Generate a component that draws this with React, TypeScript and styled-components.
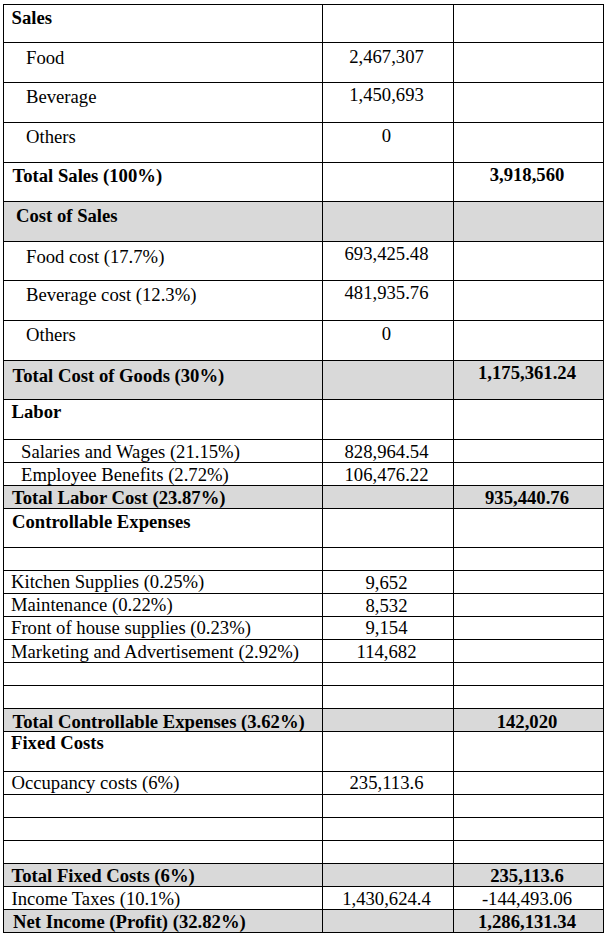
import React from "react";
import styled, { createGlobalStyle } from "styled-components";

const Global = createGlobalStyle`
  html, body { margin: 0; padding: 0; background: #ffffff; }
  body { font-family: "Liberation Serif", "Times New Roman", Times, serif; color: #000; }
`;

const Page = styled.div`
  padding: 4px 0 0 3px;
`;

const Sheet = styled.div`
  display: grid;
  grid-template-columns: 319px 131px 150px;
  width: 600px;
  border-top: 1px solid #000;
  border-left: 1px solid #000;
`;

const Cell = styled.div<{ $h: number; $gray?: boolean; $bold?: boolean; $pt: number; $indent?: number; $center?: boolean }>`
  box-sizing: border-box;
  height: ${(p) => p.$h}px;
  border-right: 1px solid #000;
  border-bottom: 1px solid #000;
  background: ${(p) => (p.$gray ? "#d9d9d9" : "#ffffff")};
  font-family: "Liberation Serif", "Times New Roman", Times, serif;
  font-size: 18.67px;
  line-height: 21px;
  font-weight: ${(p) => (p.$bold ? 700 : 400)};
  padding-top: ${(p) => Math.max(0, p.$pt)}px;
  padding-left: ${(p) => (p.$center ? 0 : p.$indent ?? 0)}px;
  padding-right: ${(p) => (p.$center ? 3 : 0)}px;
  text-align: ${(p) => (p.$center ? "center" : "left")};
  white-space: nowrap;
  overflow: visible;
`;

type Row = {
  label: string;
  bold?: boolean;
  gray?: boolean;
  indent: number;
  h: number;
  pt: number;
  npt?: number;
  c2?: string;
  c3?: string;
  c3bold?: boolean;
};

const lines = [4, 43, 83, 123, 163, 202, 242, 281, 321, 361, 400, 440, 463, 486, 509, 548, 571, 594, 617, 640, 663, 686, 709, 732, 772, 795, 818, 841, 864, 887, 910, 933];

const spec: Omit<Row, "h">[] = [
  { label: "Sales", bold: true, indent: 7.5, pt: 2.3 },
  { label: "Food", indent: 22, pt: 4, npt: 2.5, c2: "2,467,307" },
  { label: "Beverage", indent: 22, pt: 2.8, npt: 1, c2: "1,450,693" },
  { label: "Others", indent: 22, pt: 2.8, npt: 1.5, c2: "0" },
  { label: "Total Sales (100%)", bold: true, indent: 8.5, pt: 2, npt: 1, c3: "3,918,560", c3bold: true },
  { label: "Cost of Sales", bold: true, gray: true, indent: 12, pt: 3.2 },
  { label: "Food cost (17.7%)", indent: 22, pt: 3.5, npt: 1.3, c2: "693,425.48" },
  { label: "Beverage cost (12.3%)", indent: 22, pt: 3, npt: 1.3, c2: "481,935.76" },
  { label: "Others", indent: 22, pt: 3, npt: 2, c2: "0" },
  { label: "Total Cost of Goods (30%)", bold: true, gray: true, indent: 8.5, pt: 3.8, npt: 1.3, c3: "1,175,361.24", c3bold: true },
  { label: "Labor", bold: true, indent: 7.5, pt: 0.6 },
  { label: "Salaries and Wages (21.15%)", indent: 17, pt: 1.2, npt: 0.6, c2: "828,964.54" },
  { label: "Employee Benefits (2.72%)", indent: 17, pt: 1, npt: 1, c2: "106,476.22" },
  { label: "Total Labor Cost (23.87%)", bold: true, gray: true, indent: 8, pt: 1.2, npt: 0.6, c3: "935,440.76", c3bold: true },
  { label: "Controllable Expenses", bold: true, indent: 8, pt: 2.2 },
  { label: "", indent: 7, pt: 0 },
  { label: "Kitchen Supplies (0.25%)", indent: 7, pt: 0, npt: 0.6, c2: "9,652" },
  { label: "Maintenance (0.22%)", indent: 7, pt: 0, npt: 1, c2: "8,532" },
  { label: "Front of house supplies (0.23%)", indent: 7, pt: 0.3, npt: 0.3, c2: "9,154" },
  { label: "Marketing and Advertisement (2.92%)", indent: 7, pt: 0.6, npt: 0.6, c2: "114,682" },
  { label: "", indent: 7, pt: 0 },
  { label: "", indent: 7, pt: 0 },
  { label: "Total Controllable Expenses (3.62%)", bold: true, gray: true, indent: 8.5, pt: 1.5, npt: 1.5, c3: "142,020", c3bold: true },
  { label: "Fixed Costs", bold: true, indent: 7, pt: 0.3 },
  { label: "Occupancy costs (6%)", indent: 7.5, pt: 0, npt: 0, c2: "235,113.6" },
  { label: "", indent: 7, pt: 0 },
  { label: "", indent: 7, pt: 0 },
  { label: "", indent: 7, pt: 0 },
  { label: "Total Fixed Costs (6%)", bold: true, gray: true, indent: 7.5, pt: 1, npt: 1, c3: "235,113.6", c3bold: true },
  { label: "Income Taxes (10.1%)", indent: 7.5, pt: 1.3, npt: 1.3, c2: "1,430,624.4", c3: "-144,493.06" },
  { label: "Net Income (Profit) (32.82%)", bold: true, gray: true, indent: 9, pt: 0.6, npt: 0.6, c3: "1,286,131.34", c3bold: true },
];

const rows: Row[] = spec.map((r, i) => ({ ...r, h: lines[i + 1] - lines[i] - (i === 0 ? 1 : 0) }));

export default function App() {
  return (
    <>
      <Global />
      <Page>
        <Sheet>
          {rows.map((r, i) => (
            <React.Fragment key={i}>
              <Cell $h={r.h} $gray={r.gray} $bold={r.bold} $pt={r.pt} $indent={r.indent}>
                {r.label}
              </Cell>
              <Cell $h={r.h} $gray={r.gray} $pt={r.npt ?? r.pt} $center>
                {r.c2 ?? ""}
              </Cell>
              <Cell $h={r.h} $gray={r.gray} $bold={r.c3bold} $pt={r.npt ?? r.pt} $center>
                {r.c3 ?? ""}
              </Cell>
            </React.Fragment>
          ))}
        </Sheet>
      </Page>
    </>
  );
}
